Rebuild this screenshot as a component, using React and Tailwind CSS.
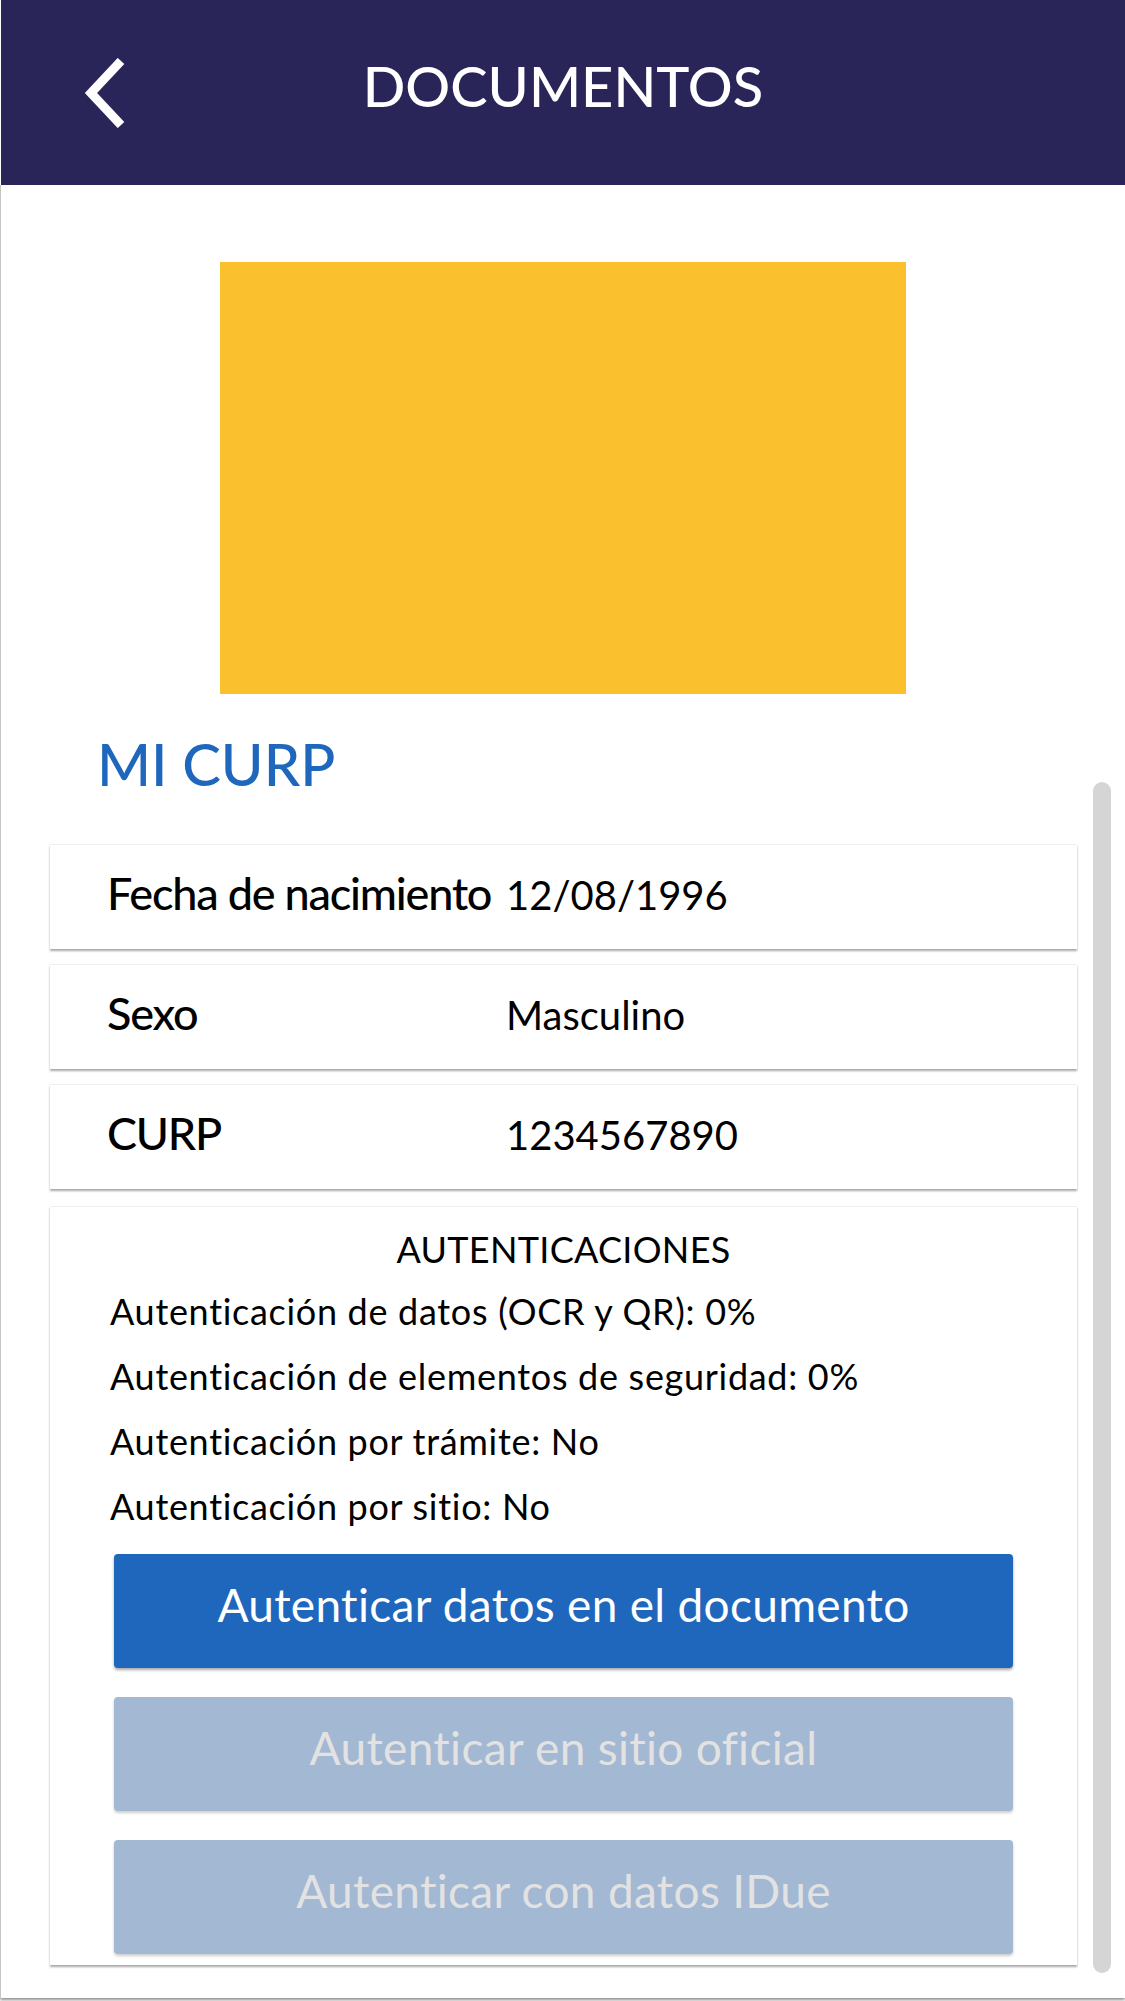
import React from "react";

const FONT = { fontFamily: "Lato, 'Noto Sans', sans-serif" };

const datos = [
  { label: "Fecha de nacimiento", value: "12/08/1996" },
  { label: "Sexo", value: "Masculino" },
  { label: "CURP", value: "1234567890" },
];

const autenticaciones = [
  "Autenticación de datos (OCR y QR): 0%",
  "Autenticación de elementos de seguridad: 0%",
  "Autenticación por trámite: No",
  "Autenticación por sitio: No",
];

const botones = [
  { label: "Autenticar datos en el documento", enabled: true },
  { label: "Autenticar en sitio oficial", enabled: false },
  { label: "Autenticar con datos IDue", enabled: false },
];

const BackIcon = () => (
  <svg width="44" height="70" viewBox="0 0 44 70" fill="none">
    <path d="M38 3 L8 35 L38 67" stroke="white" strokeWidth="9" strokeLinecap="butt" strokeLinejoin="miter" />
  </svg>
);

const DataRow = ({ label, value }) => (
  <div className="h-[105px] bg-white border-t border-[#efefef] shadow-[0_2px_2px_rgba(0,0,0,0.35)] flex items-center pl-[57px] pb-[8px]">
    <div className="flex items-baseline whitespace-nowrap">
      <span className="w-[399px] shrink-0 text-[45px] tracking-[-1.2px] leading-none font-medium text-black">{label}</span>
      <span className="text-[40px] leading-none font-normal text-black">{value}</span>
    </div>
  </div>
);

const AuthButton = ({ label, enabled }) => (
  <button
    className={
      enabled
        ? "w-full h-[114px] rounded-[4px] bg-[#1f67bd] text-white text-[46px] tracking-[0.3px] leading-none flex items-center justify-center pb-[12px] shadow-[0_2px_3px_rgba(0,0,0,0.35)]"
        : "w-full h-[114px] rounded-[4px] bg-[#a3b8d3] text-[#e2e2e2] text-[46px] tracking-[0.3px] leading-none flex items-center justify-center pb-[12px] shadow-[0_2px_3px_rgba(0,0,0,0.2)]"
    }
    style={FONT}
  >
    {label}
  </button>
);

const App = () => {
  return (
    <div className="w-[1125px] h-[2001px] bg-white relative overflow-hidden" style={FONT}>
      <header className="h-[185px] ml-[1px] bg-[#2a2559] relative flex items-center justify-center pb-[14px]">
        <div className="absolute left-[82px] top-[58px]">
          <BackIcon />
        </div>
        <h1 className="text-white text-[56px] leading-none font-medium">DOCUMENTOS</h1>
      </header>

      <main className="h-[1813px] border-l border-[#c4c4c4] shadow-[0_2px_3px_rgba(0,0,0,0.45)] flex flex-col">
        <div className="mt-[77px] ml-[219px] w-[686px] h-[432px] bg-[#fbc02d]" />

        <h2 className="mt-[41px] ml-[96px] text-[58px] leading-none font-medium text-[#1f67bd]">MI CURP</h2>

        <div className="mt-[51px] ml-[49px] w-[1027px] flex flex-col gap-[15px]">
          {datos.map((d) => (
            <DataRow key={d.label} {...d} />
          ))}

          <div className="mt-[2px] h-[759px] bg-white border-t border-[#efefef] shadow-[0_2px_2px_rgba(0,0,0,0.35)] flex flex-col pt-[13px]">
            <h3 className="text-center text-[36px] tracking-[0.3px] leading-[59px] font-normal text-black">AUTENTICACIONES</h3>
            <ul className="pl-[60px]">
              {autenticaciones.map((a) => (
                <li key={a} className="text-[36px] tracking-[0.7px] leading-[65px] text-black">{a}</li>
              ))}
            </ul>
            <div className="mt-[15px] px-[64px] flex flex-col gap-[29px]">
              {botones.map((b) => (
                <AuthButton key={b.label} {...b} />
              ))}
            </div>
          </div>
        </div>
      </main>

      {/* scroll thumb */}
      <div className="absolute left-[1093px] top-[782px] w-[18px] h-[1191px] rounded-full bg-[#d5d5d5]" />
    </div>
  );
};

export default App;
